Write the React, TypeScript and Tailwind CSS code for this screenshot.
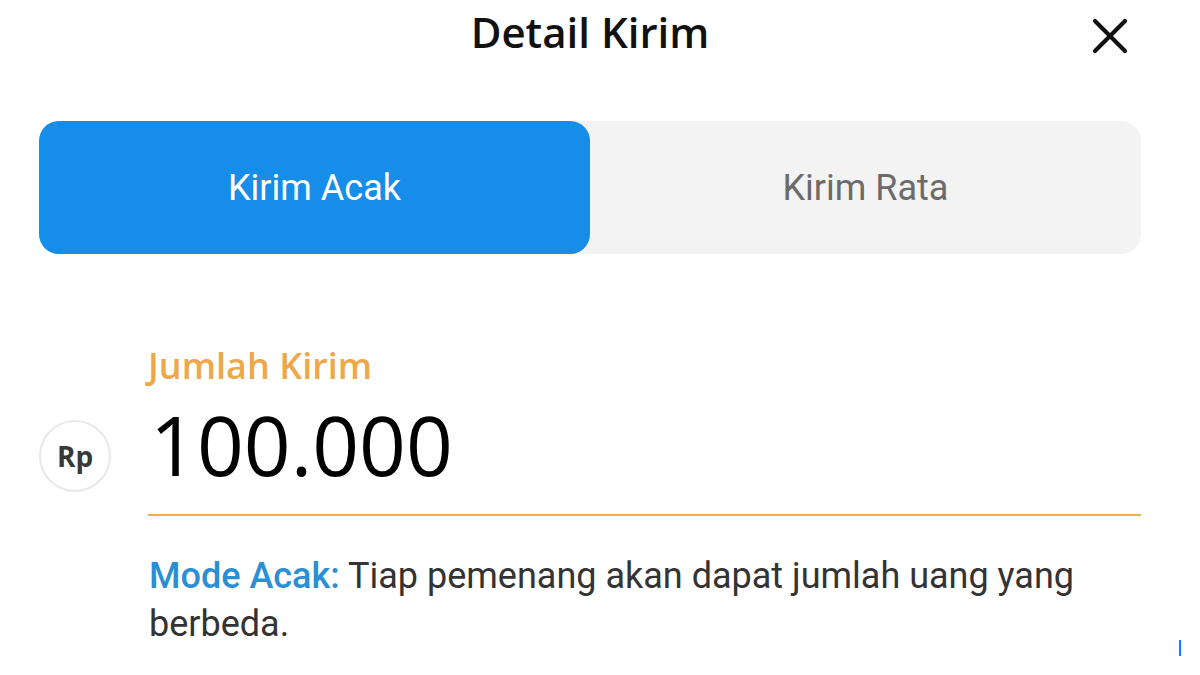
import React from "react";

function CloseIcon() {
  return (
    <svg width="36" height="36" viewBox="0 0 36 36" fill="none">
      <path d="M3 3L33 33M33 3L3 33" stroke="#111" strokeWidth="4.2" strokeLinecap="round" />
    </svg>
  );
}

export default function App() {
  return (
    <div className="relative w-[1200px] h-[675px] bg-white overflow-hidden">
      <div className="pl-[39px] pr-[59px]">
        {/* header */}
        <div className="relative flex items-center justify-center h-[64px]">
          <h1 className="text-[42px] font-semibold text-[#111] font-['Open_Sans',sans-serif] leading-none">
            Detail Kirim
          </h1>
          <button className="absolute right-[13px] top-[18px]">
            <CloseIcon />
          </button>
        </div>

        {/* mode tabs */}
        <div className="mt-[57px] flex h-[133px] rounded-[20px] bg-[#f3f3f3] font-['Roboto',sans-serif]">
          <div className="flex-1 flex items-center justify-center rounded-[20px] bg-[#168de8] text-white text-[36px]">
            Kirim Acak
          </div>
          <div className="flex-1 flex items-center justify-center text-[#6b6b6b] text-[36px]">
            Kirim Rata
          </div>
        </div>

        {/* amount input */}
        <div className="mt-[92px] flex">
          <div className="w-[109px] pt-[74px]">
            <div className="w-[72px] h-[72px] rounded-full border-2 border-[#e8e8e8] flex items-center justify-center font-['Open_Sans',sans-serif] font-bold text-[28px] text-[#383838]">
              Rp
            </div>
          </div>
          <div className="flex-1">
            <div className="text-[36px] font-semibold text-[#eea84a] font-['Open_Sans',sans-serif] leading-[40px]">
              Jumlah Kirim
            </div>
            <div className="mt-[8px] text-[82px] text-black font-['Open_Sans',sans-serif] leading-[100px] pl-[2px]">
              100.000
            </div>
            <div className="mt-[20px] h-[2px] bg-[#f2ae55]" />
          </div>
        </div>

        {/* description */}
        <p className="mt-[36px] ml-[110px] text-[36px] leading-[48px] text-[#333] font-['Roboto',sans-serif]">
          <span className="text-[#2a8fd4] font-medium">Mode Acak:</span> Tiap pemenang akan dapat jumlah uang yang berbeda.
        </p>
      </div>

      {/* text caret */}
      <div className="absolute left-[1179px] top-[640px] w-[2px] h-[16px] bg-[#0a7cff]" />
    </div>
  );
}
